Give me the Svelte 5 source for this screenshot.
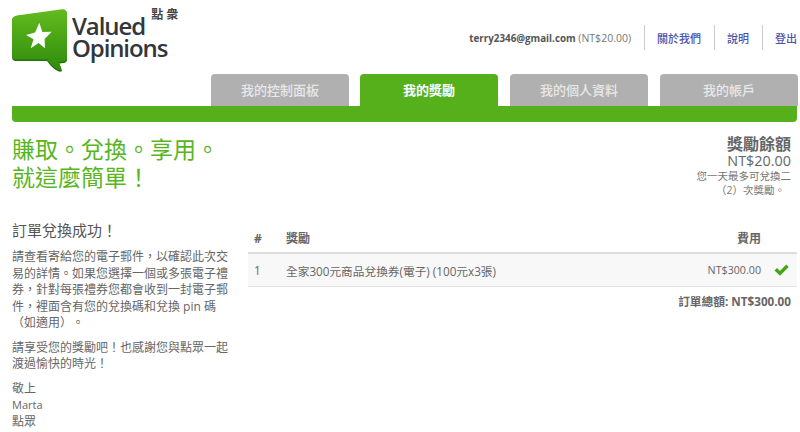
<script>
  const tabs = [
    { label: "我的控制面板", active: false },
    { label: "我的獎勵", active: true },
    { label: "我的個人資料", active: false },
    { label: "我的帳戶", active: false }
  ];
  const links = ["關於我們", "說明", "登出"];
</script>

<div class="page">
  <header class="header">
    <div class="logo">
      <svg class="mark" width="56" height="63" viewBox="0 0 56 63" aria-hidden="true">
        <defs>
          <linearGradient id="bubble" x1="0" y1="0" x2="0" y2="1">
            <stop offset="0" stop-color="#62bb1e" />
            <stop offset="1" stop-color="#2f8c0c" />
          </linearGradient>
        </defs>
        <path d="M5 6.5 L50 0.3 Q55 0 55 5 L55 50 Q55 53 52 53.5 L47 54 L50 61 Q50 62.5 47 62 Q41 60 35 51.5 L4 51.5 Q0 51.5 0 47 L0 11 Q0 7.5 5 6.5 Z" fill="#256f0a" transform="translate(0 0.6)" />
        <path d="M5 6.5 L50 0.3 Q55 0 55 5 L55 49 Q55 52 52 52.5 L47 53 L49.5 60 Q49.5 61.5 47 61 Q41 59 35 50.5 L4 50.5 Q0 50.5 0 46 L0 11 Q0 7.5 5 6.5 Z" fill="url(#bubble)" />
        <path d="M27.3 13.7 L30.4 23 L39.7 22.7 L32.6 30 L33 39.3 L26.6 34 L18.7 39.3 L21.5 30.3 L14 26 L23.1 23.4 Z" fill="#fff" />
      </svg>
      <div class="wordmark"><span>Valued</span><span>Opinions</span></div>
      <div class="zh-mark">點 衆</div>
    </div>
    <div class="head-right">
      <div class="userbar">
        <span class="user"><b>terry2346@gmail.com</b> (NT$20.00)</span>
        {#each links as link}
          <a class="link" href="#top">{link}</a>
        {/each}
      </div>
      <nav class="tabs">
        {#each tabs as tab}
          <div class="tab" class:active={tab.active}>{tab.label}</div>
        {/each}
      </nav>
    </div>
  </header>
  <div class="bar"></div>

  <section class="intro">
    <h1>賺取。兌換。享用。<br />就這麼簡單！</h1>
    <div class="balance">
      <div class="b-title">獎勵餘額</div>
      <div class="b-value">NT$20.00</div>
      <div class="b-note">您一天最多可兌換二<br /><span>（2）次獎勵。</span></div>
    </div>
  </section>

  <section class="main">
    <aside class="side">
      <h2>訂單兌換成功！</h2>
      <p>請查看寄給您的電子郵件，以確認此次交易的詳情。如果您選擇一個或多張電子禮券，針對每張禮券您都會收到一封電子郵件，裡面含有您的兌換碼和兌換 pin 碼（如適用）。</p>
      <p>請享受您的獎勵吧！也感謝您與點眾一起渡過愉快的時光！</p>
      <p>敬上<br /><span class="latin">Marta</span><br />點眾</p>
    </aside>
    <div class="order">
      <div class="row head">
        <span class="num">#</span><span class="name">獎勵</span><span class="cost">費用</span>
      </div>
      <div class="row item">
        <span class="num">1</span>
        <span class="name">全家300元商品兌換券(電子) (100元x3張)</span>
        <span class="cost">NT$300.00</span>
        <svg class="check" width="15" height="12" viewBox="0 0 15 12" aria-hidden="true">
          <path d="M0.5 6.5 L3 4 L6 7 L12.2 0.6 L14.7 3 L6 11.8 Z" fill="#43a516" />
        </svg>
      </div>
      <div class="total">訂單總額: NT$300.00</div>
    </div>
  </section>
</div>

<style>
  :global(body) {
    background: #fff;
  }

  .page {
    width: 800px;
    height: 432px;
    overflow: hidden;
    box-sizing: border-box;
    padding: 0 2px 0 12px;
    font-family: "Open Sans", "Noto Sans CJK TC", sans-serif;
    color: #555;
    text-spacing-trim: space-all;
  }

  .header {
    display: flex;
    justify-content: space-between;
    height: 106px;
  }

  .logo {
    display: flex;
    align-items: flex-start;
    padding-top: 9px;
  }

  .wordmark {
    display: flex;
    flex-direction: column;
    margin: 6px 0 0 4px;
    font-size: 24px;
    font-weight: 600;
    line-height: 22px;
    letter-spacing: -1.1px;
    color: #33363a;
  }

  .zh-mark {
    margin: 0 0 0 -16px;
    font-size: 12px;
    line-height: 12px;
    font-weight: 700;
    color: #444;
    white-space: nowrap;
  }

  .head-right {
    display: flex;
    flex-direction: column;
    align-items: flex-end;
    justify-content: space-between;
  }

  .userbar {
    display: flex;
    align-items: center;
    height: 25px;
    margin-top: 25px;
    font-size: 10.5px;
    color: #777;
  }

  .user {
    padding-right: 13px;
  }

  .user b {
    font-size: 9.8px;
    font-weight: 700;
    color: #555;
  }

  .link {
    display: flex;
    align-items: center;
    height: 25px;
    padding: 0 13px 0 12px;
    border-left: 1px solid #ccc;
    color: #4f52a8;
    font-size: 11px;
    font-weight: 500;
    text-decoration: none;
  }

  .link:last-child {
    padding-right: 1px;
  }

  .tabs {
    display: flex;
    gap: 12px;
  }

  .tab {
    width: 138px;
    height: 32px;
    border-radius: 4px 4px 0 0;
    background: #b0b0b0;
    color: #e8e8e8;
    font-size: 13px;
    font-weight: 500;
    line-height: 32px;
    text-align: center;
  }

  .tab:first-child {
    margin-right: -1px;
  }

  .tab.active {
    background: #55b01c;
    color: #fff;
    font-weight: 700;
  }

  .bar {
    height: 16px;
    margin-right: 1px;
    border-radius: 0 0 4px 4px;
    background: #55b01c;
  }

  .intro {
    display: flex;
    justify-content: space-between;
    height: 70px;
    padding: 14px 7px 0 0;
  }

  h1 {
    margin: 0;
    font-size: 23px;
    font-weight: 400;
    line-height: 27.5px;
    color: #58b51e;
    white-space: nowrap;
  }

  .balance {
    text-align: right;
  }

  .b-title {
    font-size: 16px;
    font-weight: 700;
    line-height: 17px;
    color: #666;
  }

  .b-value {
    font-size: 14.4px;
    line-height: 16px;
    color: #666;
  }

  .b-note {
    font-size: 10.5px;
    line-height: 14px;
    color: #777;
  }

  .b-note span {
    padding-right: 6px;
  }

  .main {
    display: flex;
    gap: 16px;
    padding-top: 14px;
  }

  .side {
    flex: 0 0 220px;
  }

  h2 {
    margin: 0 0 9px;
    font-size: 15px;
    font-weight: 400;
    line-height: 20px;
    color: #555;
  }

  p {
    margin: 0 0 8px;
    font-size: 12px;
    line-height: 16.5px;
    color: #666;
  }

  .latin {
    font-size: 11px;
  }

  .order {
    flex: 1;
    padding-right: 1px;
  }

  .row {
    display: flex;
    align-items: center;
  }

  .head {
    height: 34px;
    box-sizing: border-box;
    padding-top: 4px;
    border-bottom: 2px solid #ddd;
    font-size: 12px;
    font-weight: 700;
    color: #666;
  }

  .item {
    height: 32px;
    border-bottom: 1px solid #e4e4e4;
    background: #f8f8f8;
    color: #666;
    font-size: 11.7px;
  }

  .num {
    flex: 0 0 38px;
    padding-left: 6px;
    box-sizing: border-box;
  }

  .name {
    flex: 1;
  }

  .head .cost {
    padding-right: 36px;
  }

  .item .cost {
    padding-right: 13px;
    font-size: 10.7px;
  }

  .check {
    margin-right: 8px;
  }

  .total {
    padding: 5px 6px 0 0;
    font-size: 11.7px;
    font-weight: 700;
    text-align: right;
    color: #666;
  }
</style>
